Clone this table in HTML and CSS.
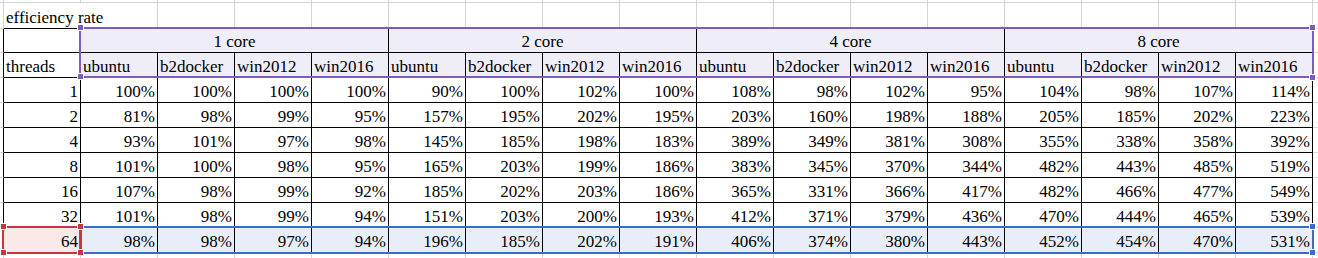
FILE: index.html
```html
<!DOCTYPE html>
<html>
<head>
<meta charset="utf-8">
<link rel="stylesheet" href="styles.css">
</head>
<body>
<div class="sheet">
  <div class="grid">
    <!-- row 0 (partial) -->
    <div class="c s"></div><div class="c"></div><div class="c"></div><div class="c"></div><div class="c"></div><div class="c"></div><div class="c"></div><div class="c"></div><div class="c"></div><div class="c"></div><div class="c"></div><div class="c"></div><div class="c"></div><div class="c"></div><div class="c"></div><div class="c"></div><div class="c"></div><div class="c"></div><div class="c"></div>
    <!-- row 1 -->
    <div class="c s"></div>
    <div class="c bb span2 txt">efficiency rate</div>
    <div class="c bb"></div><div class="c bb"></div><div class="c bb"></div><div class="c bb"></div><div class="c bb"></div><div class="c bb"></div><div class="c bb"></div><div class="c bb"></div><div class="c bb"></div><div class="c bb"></div><div class="c bb"></div><div class="c bb"></div><div class="c bb"></div><div class="c bb"></div><div class="c bb"></div>
    <div class="c"></div>
    <!-- row 2 -->
    <div class="c s sb"></div>
    <div class="c t"></div>
    <div class="c t h span4 center">1 core</div>
    <div class="c t h span4 center">2 core</div>
    <div class="c t h span4 center">4 core</div>
    <div class="c t h span4 center">8 core</div>
    <div class="c"></div>
    <!-- row 3 -->
    <div class="c s sb"></div>
    <div class="c t txt">threads</div>
    <div class="c t h txt">ubuntu</div><div class="c t h txt">b2docker</div><div class="c t h txt">win2012</div><div class="c t h txt">win2016</div>
    <div class="c t h txt">ubuntu</div><div class="c t h txt">b2docker</div><div class="c t h txt">win2012</div><div class="c t h txt">win2016</div>
    <div class="c t h txt">ubuntu</div><div class="c t h txt">b2docker</div><div class="c t h txt">win2012</div><div class="c t h txt">win2016</div>
    <div class="c t h txt">ubuntu</div><div class="c t h txt">b2docker</div><div class="c t h txt">win2012</div><div class="c t h txt">win2016</div>
    <div class="c"></div>
    <!-- threads 1 -->
    <div class="c s sb"></div>
    <div class="c t num">1</div>
    <div class="c t num">100%</div><div class="c t num">100%</div><div class="c t num">100%</div><div class="c t num">100%</div>
    <div class="c t num">90%</div><div class="c t num">100%</div><div class="c t num">102%</div><div class="c t num">100%</div>
    <div class="c t num">108%</div><div class="c t num">98%</div><div class="c t num">102%</div><div class="c t num">95%</div>
    <div class="c t num">104%</div><div class="c t num">98%</div><div class="c t num">107%</div><div class="c t num">114%</div>
    <div class="c"></div>
    <!-- threads 2 -->
    <div class="c s sb"></div>
    <div class="c t num">2</div>
    <div class="c t num">81%</div><div class="c t num">98%</div><div class="c t num">99%</div><div class="c t num">95%</div>
    <div class="c t num">157%</div><div class="c t num">195%</div><div class="c t num">202%</div><div class="c t num">195%</div>
    <div class="c t num">203%</div><div class="c t num">160%</div><div class="c t num">198%</div><div class="c t num">188%</div>
    <div class="c t num">205%</div><div class="c t num">185%</div><div class="c t num">202%</div><div class="c t num">223%</div>
    <div class="c"></div>
    <!-- threads 4 -->
    <div class="c s sb"></div>
    <div class="c t num">4</div>
    <div class="c t num">93%</div><div class="c t num">101%</div><div class="c t num">97%</div><div class="c t num">98%</div>
    <div class="c t num">145%</div><div class="c t num">185%</div><div class="c t num">198%</div><div class="c t num">183%</div>
    <div class="c t num">389%</div><div class="c t num">349%</div><div class="c t num">381%</div><div class="c t num">308%</div>
    <div class="c t num">355%</div><div class="c t num">338%</div><div class="c t num">358%</div><div class="c t num">392%</div>
    <div class="c"></div>
    <!-- threads 8 -->
    <div class="c s sb"></div>
    <div class="c t num">8</div>
    <div class="c t num">101%</div><div class="c t num">100%</div><div class="c t num">98%</div><div class="c t num">95%</div>
    <div class="c t num">165%</div><div class="c t num">203%</div><div class="c t num">199%</div><div class="c t num">186%</div>
    <div class="c t num">383%</div><div class="c t num">345%</div><div class="c t num">370%</div><div class="c t num">344%</div>
    <div class="c t num">482%</div><div class="c t num">443%</div><div class="c t num">485%</div><div class="c t num">519%</div>
    <div class="c"></div>
    <!-- threads 16 -->
    <div class="c s sb"></div>
    <div class="c t num">16</div>
    <div class="c t num">107%</div><div class="c t num">98%</div><div class="c t num">99%</div><div class="c t num">92%</div>
    <div class="c t num">185%</div><div class="c t num">202%</div><div class="c t num">203%</div><div class="c t num">186%</div>
    <div class="c t num">365%</div><div class="c t num">331%</div><div class="c t num">366%</div><div class="c t num">417%</div>
    <div class="c t num">482%</div><div class="c t num">466%</div><div class="c t num">477%</div><div class="c t num">549%</div>
    <div class="c"></div>
    <!-- threads 32 -->
    <div class="c s sb"></div>
    <div class="c t num">32</div>
    <div class="c t num">101%</div><div class="c t num">98%</div><div class="c t num">99%</div><div class="c t num">94%</div>
    <div class="c t num">151%</div><div class="c t num">203%</div><div class="c t num">200%</div><div class="c t num">193%</div>
    <div class="c t num">412%</div><div class="c t num">371%</div><div class="c t num">379%</div><div class="c t num">436%</div>
    <div class="c t num">470%</div><div class="c t num">444%</div><div class="c t num">465%</div><div class="c t num">539%</div>
    <div class="c"></div>
    <!-- threads 64 (selected) -->
    <div class="c s sb"></div>
    <div class="c t num red">64</div>
    <div class="c t num sel">98%</div><div class="c t num sel">98%</div><div class="c t num sel">97%</div><div class="c t num sel">94%</div>
    <div class="c t num sel">196%</div><div class="c t num sel">185%</div><div class="c t num sel">202%</div><div class="c t num sel">191%</div>
    <div class="c t num sel">406%</div><div class="c t num sel">374%</div><div class="c t num sel">380%</div><div class="c t num sel">443%</div>
    <div class="c t num sel">452%</div><div class="c t num sel">454%</div><div class="c t num sel">470%</div><div class="c t num sel">531%</div>
    <div class="c"></div>
    <!-- trailing row -->
    <div class="c s"></div><div class="c"></div><div class="c"></div><div class="c"></div><div class="c"></div><div class="c"></div><div class="c"></div><div class="c"></div><div class="c"></div><div class="c"></div><div class="c"></div><div class="c"></div><div class="c"></div><div class="c"></div><div class="c"></div><div class="c"></div><div class="c"></div><div class="c"></div><div class="c"></div>
  </div>

  <div class="selbox purple-box"></div>
  <div class="handle purple tl1"></div>
  <div class="handle purple bl1"></div>
  <div class="handle purple tr1"></div>
  <div class="handle purple br1"></div>

  <div class="selbox blue-box"></div>
  <div class="handle blue tr2"></div>
  <div class="handle blue br2"></div>

  <div class="selbox red-box"></div>
  <div class="handle redh tl3"></div>
  <div class="handle redh tr3"></div>
  <div class="handle redh bl3"></div>
  <div class="handle redh br3"></div>
</div>
</body>
</html>
```

FILE: styles.css
```css
html, body {
  margin: 0;
  padding: 0;
  background: #ffffff;
  overflow: hidden;
}
body {
  width: 1318px;
  height: 258px;
  font-family: "Liberation Serif", "DejaVu Serif", serif;
}
.sheet {
  position: relative;
  width: 1318px;
  height: 258px;
  overflow: hidden;
  font-family: "Liberation Serif", "DejaVu Serif", serif;
  font-size: 17px;
  color: #000000;
}
.grid {
  display: grid;
  grid-template-columns: 4px repeat(18, 77px);
  grid-template-rows: 3px 26px 24px 25px repeat(7, 25px) 25px;
  width: max-content;
}
.c {
  box-sizing: border-box;
  border-right: 1px solid #d4d4d4;
  border-bottom: 1px solid #d4d4d4;
  white-space: nowrap;
  overflow: visible;
  line-height: 20px;
  display: flex;
  align-items: flex-end;
  padding: 0 2px;
  min-width: 0;
  font-family: "Liberation Serif", "DejaVu Serif", serif;
}
.s { padding: 0; }
.sb { border-right-color: #000000; }
.bb { border-bottom-color: #000000; }
.t {
  border-right-color: #000000;
  border-bottom-color: #000000;
}
.h { background: #efedf7; }
.span2 { grid-column: span 2; }
.span4 { grid-column: span 4; }
.center { justify-content: center; }
.txt { justify-content: flex-start; padding-left: 2px; }
.num { justify-content: flex-end; padding-right: 2px; }
.sel { background: #e8eef9; }
.red { background: #fbe9e9; }

.selbox {
  position: absolute;
  box-sizing: border-box;
  border: 2px solid;
}
.purple-box {
  left: 79px; top: 27px; width: 1235px; height: 51px;
  border-color: #7e5cba;
}
.blue-box {
  left: 79px; top: 226px; width: 1235px; height: 28px;
  border-color: #3a6dc6;
}
.red-box {
  left: 2px; top: 226px; width: 80px; height: 28px;
  border-color: #c3383d;
}
.handle {
  position: absolute;
  width: 5px;
  height: 5px;
  box-shadow: 0 0 0 1px #ffffff;
}
.purple { background: #7e5cba; }
.blue { background: #3a6dc6; }
.redh { background: #c3383d; }
.tl1 { left: 78px; top: 25px; }
.bl1 { left: 78px; top: 74px; }
.tr1 { left: 1310px; top: 25px; }
.br1 { left: 1310px; top: 75px; }
.tr2 { left: 1310px; top: 224px; }
.br2 { left: 1310px; top: 250px; }
.tl3 { left: 1px; top: 224px; }
.tr3 { left: 78px; top: 224px; }
.bl3 { left: 1px; top: 250px; }
.br3 { left: 78px; top: 250px; }
```
